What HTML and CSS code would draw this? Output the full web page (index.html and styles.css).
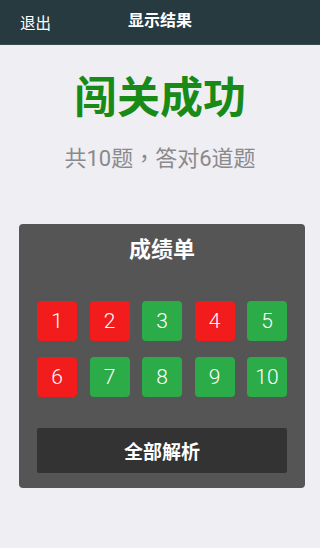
FILE: index.html
```html
<!DOCTYPE html>
<html lang="zh-CN">
<head>
<meta charset="utf-8">
<title>显示结果</title>
<link rel="stylesheet" href="styles.css">
</head>
<body>
<header class="topbar">
  <span class="back">退出</span>
  <span class="title">显示结果</span>
</header>
<main class="content">
  <h1 class="headline">闯关成功</h1>
  <p class="summary">共10题<span class="punct" lang="zh-TW">，</span>答对6道题</p>
  <section class="card">
    <h2 class="card-title">成绩单</h2>
    <div class="grid">
      <span class="cell wrong">1</span>
      <span class="cell wrong">2</span>
      <span class="cell right">3</span>
      <span class="cell wrong">4</span>
      <span class="cell right">5</span>
      <span class="cell wrong">6</span>
      <span class="cell right">7</span>
      <span class="cell right">8</span>
      <span class="cell right">9</span>
      <span class="cell right">10</span>
    </div>
    <button class="all-btn">全部解析</button>
  </section>
</main>
</body>
</html>
```
FILE: styles.css
```css
* { box-sizing: border-box; }
html, body {
  margin: 0;
  padding: 0;
  background: #efeef3;
  font-family: Roboto, "Noto Sans CJK SC", sans-serif;
}
.topbar {
  position: relative;
  height: 45px;
  background: #263a40;
  border-bottom: 1px solid #3a4c52;
  display: flex;
  align-items: center;
  justify-content: center;
  color: #fff;
}
.back {
  position: absolute;
  left: 20px;
  top: 14px;
  font-size: 15.5px;
  line-height: 20px;
}
.title {
  font-size: 16px;
  font-weight: bold;
  line-height: 20px;
  margin-top: -2px;
}
.content {
  display: flex;
  flex-direction: column;
  align-items: center;
}
.headline {
  margin: 27px 0 0;
  font-size: 43px;
  line-height: 52px;
  font-weight: bold;
  color: #178a17;
}
.summary {
  margin: 17px 0 0;
  height: 30px;
  font-size: 22px;
  line-height: 30px;
  color: #8a8a8c;
}
.punct {
  font-family: "Noto Sans CJK TC", "Noto Sans CJK SC", sans-serif;
}
.card {
  align-self: flex-start;
  margin: 53px 0 0 19px;
  width: 286px;
  background: #555555;
  border-radius: 4px;
  padding: 11px 18px 15px;
  display: flex;
  flex-direction: column;
  box-shadow: 0 0 1px rgba(255,255,255,0.8);
}
.card-title {
  margin: 0;
  text-align: center;
  color: #fff;
  font-size: 22px;
  line-height: 30px;
  font-weight: bold;
}
.grid {
  margin-top: 36px;
  display: grid;
  grid-template-columns: repeat(5, 40px);
  justify-content: space-between;
  row-gap: 16px;
}
.cell {
  width: 40px;
  height: 40px;
  border-radius: 4px;
  display: flex;
  align-items: center;
  justify-content: center;
  color: #fff;
  font-size: 21px;
  font-weight: 300;
}
.wrong { background: #f21c1c; }
.right { background: #2cac48; }
.all-btn {
  margin-top: 31px;
  height: 45px;
  width: 100%;
  border: 0;
  border-radius: 2px;
  background: #333333;
  color: #fff;
  font-family: inherit;
  font-size: 19px;
  font-weight: bold;
}
```
